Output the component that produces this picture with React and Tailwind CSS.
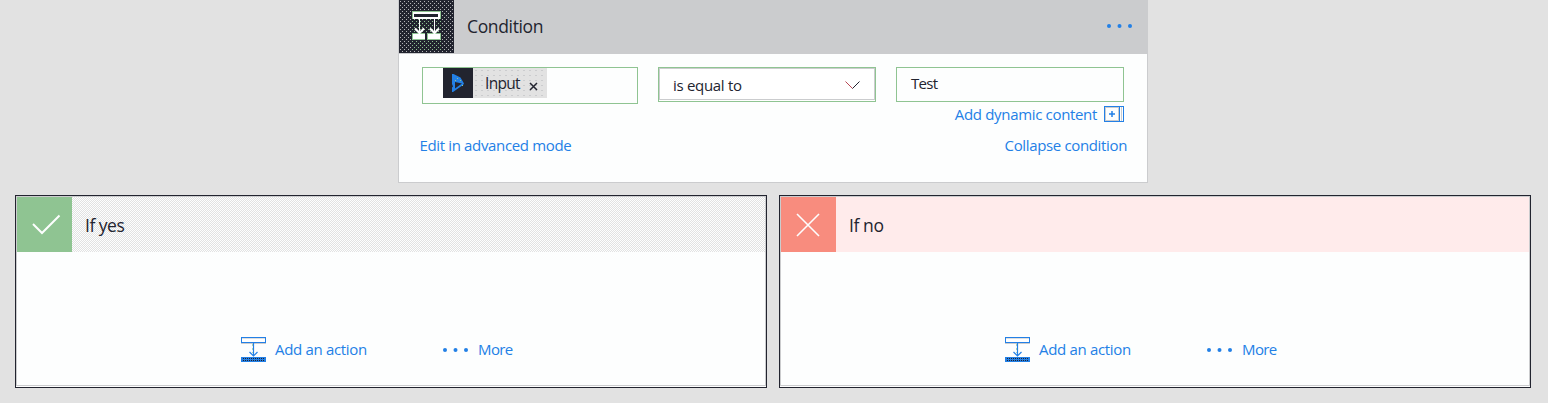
import React from 'react';

function Dots({ className }) {
  return (
    <svg className={className} viewBox="0 0 27 6" width="27" height="6" fill="#2380e6">
      <circle cx="3" cy="3" r="2" />
      <circle cx="13.5" cy="3" r="2" />
      <circle cx="24" cy="3" r="2" />
    </svg>
  );
}

function ConditionIcon() {
  return (
    <svg className="block h-[53px] w-[55px] shrink-0" viewBox="0 0 55 53" shapeRendering="crispEdges">
      <defs>
        <pattern id="greyDots" width="4" height="4" patternUnits="userSpaceOnUse">
          <rect x="1" y="1" width="1" height="1" fill="#b4b5b8" />
          <rect x="3" y="3" width="1" height="1" fill="#b4b5b8" />
        </pattern>
        <pattern id="greenDots" width="4" height="4" patternUnits="userSpaceOnUse">
          <rect x="1" y="1" width="1" height="1" fill="#8fc492" />
          <rect x="3" y="3" width="1" height="1" fill="#8fc492" />
        </pattern>
      </defs>
      <rect width="55" height="53" fill="#22242f" />
      <rect width="55" height="53" fill="url(#greyDots)" />
      <rect x="13" y="12" width="30" height="39" fill="#22242f" />
      <rect x="13" y="12" width="30" height="39" fill="url(#greenDots)" />
      <rect x="13" y="11" width="29" height="8" fill="#8fc492" />
      <rect x="14" y="12" width="27" height="7" fill="#fff" />
      <rect x="15" y="14" width="24" height="3" fill="#22242f" />
      <rect x="13" y="33" width="29" height="7" fill="#8fc492" />
      <rect x="14" y="34" width="12" height="5" fill="#fff" />
      <rect x="29" y="34" width="12" height="5" fill="#fff" />
      <rect x="26" y="33" width="2" height="7" fill="#22242f" />
      <rect x="20" y="19" width="1" height="14" fill="#fff" />
      <rect x="35" y="19" width="1" height="14" fill="#fff" />
      <path d="M16 28.5l4.5 4.5L25 28.5M31 28.5l4.5 4.5L40 28.5" fill="none" stroke="#fff" strokeWidth="2.2" shapeRendering="auto" />
    </svg>
  );
}

function ActionIcon() {
  return (
    <svg className="block shrink-0" width="25" height="26" viewBox="0 0 25 26">
      <defs>
        <pattern id="barDots" width="2" height="2" patternUnits="userSpaceOnUse">
          <rect x="0" y="1" width="1" height="1" fill="#22242f" />
        </pattern>
      </defs>
      <rect x="0" y="6" width="25" height="1" fill="#cbccce" />
      <rect x="0.5" y="0.5" width="24" height="5" fill="#fff" stroke="#2380e6" />
      <path d="M1 1.5h23" stroke="#dcdee0" />
      <path d="M12.5 6v13M8.5 15l4 4 4-4" fill="none" stroke="#2380e6" strokeWidth="1.2" />
      <path d="M11.5 7v9" stroke="#8fc492" strokeWidth="0.7" strokeDasharray="2 2" />
      <rect x="0" y="20" width="25" height="5" fill="#2380e6" />
      <rect x="1" y="21" width="23" height="3" fill="url(#barDots)" />
    </svg>
  );
}

function Branch({ title, icon, iconClass, headerClass, titleClass }) {
  return (
    <section className="h-[193px] w-[752px] border border-[#22242f] bg-white pb-px">
      <div className="flex h-full flex-col border border-[#cbccce] bg-[#fdfefe]">
        <header className={'flex h-[55px] shrink-0 items-center ' + headerClass}>
          <div className={'flex h-[55px] w-[55px] items-center ' + iconClass}>{icon}</div>
          <h2 className={'ml-[13px] text-[17.5px] leading-6 ' + titleClass}>{title}</h2>
        </header>
        <div className="flex pt-[85px] pl-[224px] text-[#2380e6]">
          <ActionIcon />
          <span className="ml-[9px] w-[167px] pt-px text-[15px] leading-[22px] tracking-[-0.32px]">Add an action</span>
          <Dots className="mt-[10px] shrink-0" />
          <span className="ml-[9px] pt-px text-[15px] leading-[22px] tracking-[-0.6px]">More</span>
        </div>
      </div>
    </section>
  );
}

export default function App() {
  return (
    <div className="h-[403px] w-[1548px] overflow-hidden bg-[#e2e2e2] font-['Open_Sans','Noto_Sans',sans-serif] whitespace-nowrap text-[#22242f]">
      <section className="ml-[398px] h-[183px] w-[750px] border border-t-0 border-[#cbccce] bg-[#fdfefe]">
        <header className="flex h-[54px] items-start bg-[#cbccce]">
          <ConditionIcon />
          <h1 className="mt-[14px] ml-[13px] text-[17.5px] leading-6 tracking-[-0.35px]">Condition</h1>
          <Dots className="mt-[23px] mr-[14px] ml-auto" />
        </header>
        <div className="flex items-start pt-[13px] pl-[23px]">
          <div className="flex h-[37px] w-[216px] border border-[#8fc492] bg-[#fdfefe] pl-[20px]">
            <div className="flex h-[30px] w-[104px] bg-[#e2e2e2] bg-[radial-gradient(#cbccce_0.6px,transparent_0.7px)] bg-[size:6px_5px]">
              <div className="flex h-[30px] w-[30px] justify-center bg-[#22242f] pt-[6px]">
                <svg width="14" height="18" viewBox="0 0 14 18">
                  <path fillRule="evenodd" d="M1 0h1.500l7 3.500 3.500 6-1 1.500-10 7H1v-4.500l1-1-1-2.500zM4 8v6.500l7-5z" fill="#2380e6" />
                  <path d="M6 4h1v1H6zM4 6h1v1H4zM9 6h1v1H9zM11 11h1v1h-1z" fill="#8fc492" />
                </svg>
              </div>
              <span className="ml-[12px] w-[44px] pt-[3px] text-[15.5px] leading-6 tracking-[-0.7px]">Input</span>
              <svg className="mt-[14px]" width="9" height="9" viewBox="0 0 9 9">
                <path d="M1 1l7 7M8 1L1 8" stroke="#22242f" strokeWidth="1.5" />
              </svg>
            </div>
          </div>
          <div className="ml-[20px] h-[35px] w-[218px] border border-[#8fc492] bg-white pb-px">
            <div className="flex h-full items-center border border-[#cbccce] pr-[14px] pl-[13px]">
              <span className="pt-px text-[15px] leading-6 tracking-[-0.3px]">is equal to</span>
              <svg className="mt-px ml-auto" width="16" height="10" viewBox="0 0 16 10" fill="none">
                <path d="M1.500 1.500l7 7" stroke="#b84752" />
                <path d="M8.500 8.500l7-7" stroke="#22242f" />
              </svg>
            </div>
          </div>
          <div className="ml-[20px] h-[35px] w-[228px] border border-[#8fc492] pl-[14px]">
            <span className="block pt-[3px] text-[15px] leading-6 tracking-[-0.7px]">Test</span>
          </div>
        </div>
        <div className="-mt-px flex h-[22px] items-center justify-end pr-[23px] text-[#2380e6]">
          <span className="mr-[7px] text-[15px] leading-[22px] tracking-[-0.33px]">Add dynamic content</span>
          <svg width="20" height="16" viewBox="0 0 20 16" fill="none">
            <rect x="1.5" y="1.5" width="13" height="13" stroke="#cbccce" />
            <path d="M17.5 1v14" stroke="#cbccce" />
            <rect x="0.5" y="0.5" width="19" height="15" stroke="#2380e6" />
            <path d="M15.5 0v16" stroke="#2380e6" />
            <path d="M8 5v6M5 8h6" stroke="#2380e6" strokeWidth="1.5" />
          </svg>
        </div>
        <div className="mt-[9px] flex justify-between pr-[20px] pl-[20.5px] text-[15px] leading-[22px] tracking-[-0.35px] text-[#2380e6]">
          <span>Edit in advanced mode</span>
          <span>Collapse condition</span>
        </div>
      </section>
      <main className="mt-[12px] ml-[15px] flex gap-[12px]">
        <Branch
          title="If yes"
          titleClass="tracking-[-0.5px]"
          iconClass="bg-[#8fc492] pl-[15px]"
          headerClass="bg-[repeating-conic-gradient(#e2e2e2_0_25%,#fdfefe_0_50%)] bg-[size:2px_2px]"
          icon={
            <svg width="29" height="21" viewBox="0 0 29 21">
              <path d="M1 10l9 9L27.5 1.5" fill="none" stroke="#fdfefe" strokeWidth="2" />
            </svg>
          }
        />
        <Branch
          title="If no"
          titleClass="tracking-[-0.4px]"
          iconClass="bg-[#f88c7e] pl-[15px]"
          headerClass="bg-[#ffebeb]"
          icon={
            <svg width="24" height="24" viewBox="0 0 24 24">
              <path d="M1 1l22 22M23 1L1 23" fill="none" stroke="#fdfefe" strokeWidth="1.6" />
            </svg>
          }
        />
      </main>
    </div>
  );
}
